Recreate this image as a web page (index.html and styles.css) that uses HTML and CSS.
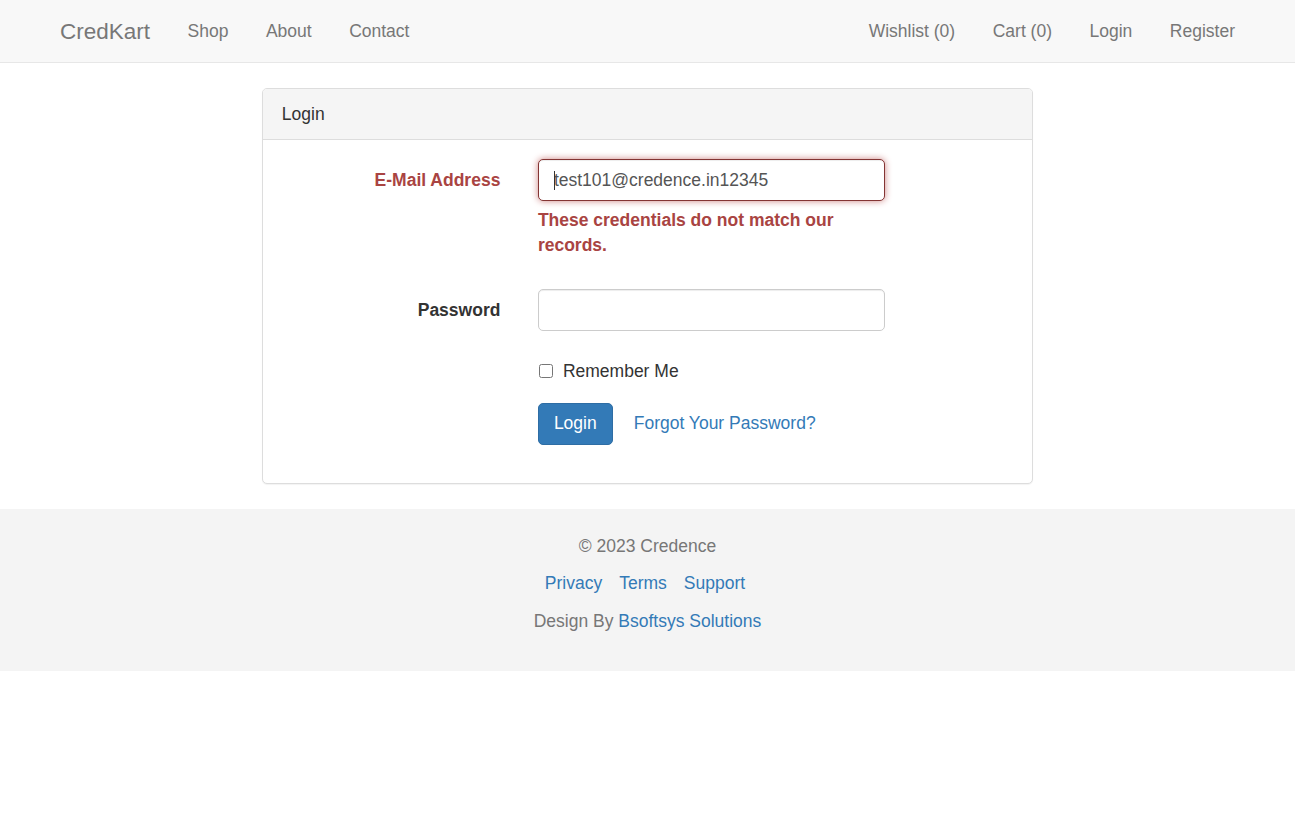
FILE: index.html
```html
<!DOCTYPE html>
<html lang="en">
<head>
<meta charset="utf-8">
<title>CredKart - Login</title>
<link rel="stylesheet" href="styles.css">
</head>
<body>
<nav class="navbar">
  <div class="navbar-inner">
    <div class="nav-left">
      <a class="brand" href="#">CredKart</a>
      <ul class="nav">
        <li><a href="#">Shop</a></li>
        <li><a href="#">About</a></li>
        <li><a href="#">Contact</a></li>
      </ul>
    </div>
    <ul class="nav nav-right">
      <li><a href="#">Wishlist (0)</a></li>
      <li><a href="#">Cart (0)</a></li>
      <li><a href="#">Login</a></li>
      <li><a href="#">Register</a></li>
    </ul>
  </div>
</nav>

<main class="main">
  <div class="panel">
    <div class="panel-heading">Login</div>
    <div class="panel-body">
      <form class="form">
        <div class="form-row has-error">
          <label class="control-label" for="email">E-Mail Address</label>
          <div class="field">
            <div class="input-wrap">
              <input id="email" class="form-control focused" type="email" value="test101@credence.in12345">
              <span class="caret"></span>
            </div>
            <span class="help-block"><strong>These credentials do not match our records.</strong></span>
          </div>
        </div>
        <div class="form-row">
          <label class="control-label" for="password">Password</label>
          <div class="field">
            <input id="password" class="form-control" type="password">
          </div>
        </div>
        <div class="form-row">
          <div class="spacer"></div>
          <div class="field checkbox">
            <label class="check-label"><input type="checkbox" class="check"> Remember Me</label>
          </div>
        </div>
        <div class="form-row last">
          <div class="spacer"></div>
          <div class="field actions">
            <button type="button" class="btn btn-primary">Login</button>
            <a class="btn-link" href="#">Forgot Your Password?</a>
          </div>
        </div>
      </form>
    </div>
  </div>
</main>

<footer class="footer">
  <p class="muted">© 2023 Credence</p>
  <p class="links"><a href="#">Privacy</a><a href="#">Terms</a><a href="#">Support</a></p>
  <p class="muted">Design By <a href="#">Bsoftsys Solutions</a></p>
</footer>
</body>
</html>
```

FILE: styles.css
```css
* { box-sizing: border-box; }

html, body {
  margin: 0;
  padding: 0;
}

body {
  font-family: "Liberation Sans", Arial, Helvetica, sans-serif;
  font-size: 17.5px;
  line-height: 25px;
  color: #333;
  background: #fff;
}

a { color: #337ab7; text-decoration: none; }

/* Navbar */
.navbar {
  background: #f8f8f8;
  border-bottom: 1px solid #e7e7e7;
  height: 63px;
  margin-bottom: 25px;
}

.navbar-inner {
  width: 1212.5px;
  margin: 0 auto;
  display: flex;
  justify-content: space-between;
  align-items: flex-start;
}

.nav-left { display: flex; }

.brand {
  display: block;
  height: 62px;
  padding: 18.75px 18.75px;
  font-size: 22.5px;
  line-height: 25px;
  color: #777;
}

.nav {
  list-style: none;
  margin: 0;
  padding: 0;
  display: flex;
}

.nav a {
  display: block;
  padding: 18.75px 18.75px;
  line-height: 25px;
  color: #777;
}

/* Panel */
.main {
  width: 1212.5px;
  margin: 0 auto;
  padding: 0 0 0 220.8px;
}

.panel {
  width: 770.8px;
  border: 1px solid #ddd;
  border-radius: 5px;
  box-shadow: 0 1px 1px rgba(0,0,0,.05);
  margin-bottom: 25px;
  background: #fff;
}

.panel-heading {
  background: #f5f5f5;
  border-bottom: 1px solid #ddd;
  border-radius: 4px 4px 0 0;
  padding: 12.5px 18.75px;
  line-height: 25px;
  color: #333;
}

.panel-body {
  padding: 18.75px;
}

.form { margin: 0 -18.75px; }

.form-row {
  display: grid;
  grid-template-columns: 256.1px 384.2px;
  margin-bottom: 18.75px;
}

.control-label,
.spacer {
  padding: 8.75px 18.75px 0;
  text-align: right;
  font-weight: 700;
}

.field { padding: 0 18.75px; }

.has-error .control-label,
.help-block { color: #a94442; }

.input-wrap { position: relative; }

.form-control {
  display: block;
  width: 100%;
  height: 42.5px;
  padding: 7.5px 15px;
  font-family: inherit;
  font-size: 17.5px;
  line-height: 25px;
  color: #555;
  background: #fff;
  border: 1px solid #ccc;
  border-radius: 5px;
  box-shadow: inset 0 1px 1px rgba(0,0,0,.075);
  outline: none;
}

.form-control.focused {
  border-color: #843534;
  box-shadow: inset 0 1px 1px rgba(0,0,0,.075), 0 0 7px #ce8483;
}

.caret {
  position: absolute;
  left: 16px;
  top: 12px;
  width: 1px;
  height: 19px;
  background: #333;
}

.help-block {
  display: block;
  margin-top: 6.25px;
  margin-bottom: 12.5px;
}

.checkbox {
  padding-top: 8.75px;
  min-height: 33.75px;
}

.check-label {
  display: flex;
  align-items: center;
  line-height: 25px;
  font-weight: 400;
  color: #333;
}

.check {
  width: 14px;
  height: 14px;
  margin: 0 10px 0 1px;
}

.actions {
  display: flex;
  align-items: center;
}

.btn {
  height: 42.5px;
  padding: 7.5px 15px;
  font-family: inherit;
  font-size: 17.5px;
  line-height: 25px;
  border-radius: 5px;
  cursor: pointer;
}

.btn-primary {
  color: #fff;
  background: #337ab7;
  border: 1.25px solid #2e6da4;
}

.btn-link {
  margin-left: 5px;
  padding: 7.5px 16px;
  line-height: 25px;
  color: #337ab7;
}

/* Footer */
.footer {
  background: #f4f4f4;
  padding: 25px 0;
  text-align: center;
}

.footer p {
  margin: 0 0 12.5px;
  line-height: 25px;
}

.muted { color: #777; }

.links {
  display: flex;
  justify-content: center;
  gap: 17px;
  padding-right: 5px;
}
```
